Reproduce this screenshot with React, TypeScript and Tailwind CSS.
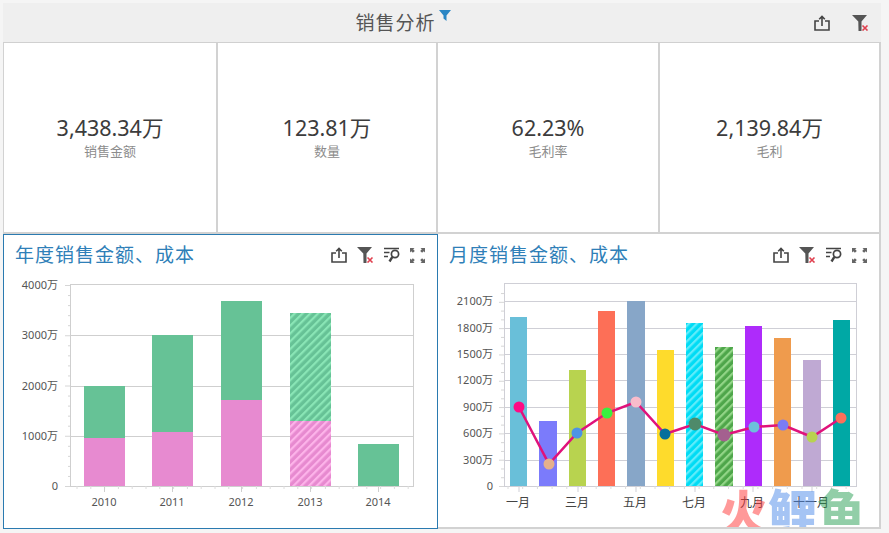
const kpis = [
  { value: '3,438.34万', label: '销售金额', width: 'w-[215px] border-l' },
  { value: '123.81万', label: '数量', width: 'w-[220px]' },
  { value: '62.23%', label: '毛利率', width: 'w-[222px]' },
  { value: '2,139.84万', label: '毛利', width: 'w-[221px]' },
]

const yearBars = [
  { label: '2010', x: 84, total: 386, cost: 438 },
  { label: '2011', x: 152, total: 335, cost: 432 },
  { label: '2012', x: 221, total: 301, cost: 400 },
  { label: '2013', x: 290, total: 313, cost: 421, hatched: true },
  { label: '2014', x: 358, total: 444, cost: 486 },
]

const monthBars = [
  { x: 510, w: 17, top: 317, fill: '#69bfd9' },
  { x: 539, w: 18, top: 421, fill: '#7b7bfb' },
  { x: 569, w: 17, top: 370, fill: '#b8d34f' },
  { x: 598, w: 17, top: 311, fill: '#fd6f57' },
  { x: 627, w: 18, top: 301, fill: '#87a6c8' },
  { x: 657, w: 17, top: 350, fill: '#fedb2c' },
  { x: 686, w: 17, top: 323, fill: 'url(#hatch-cyan)' },
  { x: 715, w: 18, top: 347, fill: 'url(#hatch-leaf)' },
  { x: 745, w: 17, top: 326, fill: '#ae2bfb' },
  { x: 774, w: 17, top: 338, fill: '#ef9b4d' },
  { x: 803, w: 18, top: 360, fill: '#bfa9d3' },
  { x: 833, w: 17, top: 320, fill: '#00a8a5' },
]

const monthPoints = [
  { x: 519, y: 407, r: 5.5, fill: '#ff0a84' },
  { x: 549, y: 464, r: 5.5, fill: '#e4b08d' },
  { x: 577, y: 433, r: 5.5, fill: '#4d94e5' },
  { x: 607, y: 413, r: 5.5, fill: '#39ef3f' },
  { x: 636, y: 402, r: 5.5, fill: '#f9bccb' },
  { x: 665, y: 434, r: 5.5, fill: '#066f9c' },
  { x: 695, y: 424, r: 6.5, fill: '#4e8a6a' },
  { x: 724, y: 435, r: 6.5, fill: '#a4608f' },
  { x: 754, y: 427, r: 5.5, fill: '#6cc0db' },
  { x: 783, y: 425, r: 5.5, fill: '#7a7cf5' },
  { x: 812, y: 437, r: 5.5, fill: '#b8d34f' },
  { x: 841, y: 418, r: 5.5, fill: '#fc6f5a' },
]

const monthTicks = [
  { y: 301, label: '2100万' },
  { y: 328, label: '1800万' },
  { y: 354, label: '1500万' },
  { y: 380, label: '1200万' },
  { y: 407, label: '900万' },
  { y: 433, label: '600万' },
  { y: 460, label: '300万' },
]

const monthLabels = [
  { x: 518, label: '一月' },
  { x: 577, label: '三月' },
  { x: 635, label: '五月' },
  { x: 694, label: '七月' },
  { x: 752, label: '九月' },
  { x: 811, label: '十一月' },
]

const ShareIcon = () => (
  <svg width="16" height="16" viewBox="0 0 16 16" fill="none" stroke="#444" strokeWidth="1.6">
    <path d="M5 6H1v9h14V6h-4" />
    <path d="M8 11V1.5M5.2 4.2 8 1.4l2.8 2.8" />
  </svg>
)

const FilterClearIcon = () => (
  <svg width="17" height="16" viewBox="0 0 17 16">
    <path d="M0 0h15L9.5 6.5V16H6.5l-.2-9.5z" fill="#555" />
    <path d="M10.5 10.5l5 5M15.5 10.5l-5 5" stroke="#e0404f" strokeWidth="1.6" />
  </svg>
)

const FindIcon = () => (
  <svg width="16" height="16" viewBox="0 0 16 16" fill="none" stroke="#444" strokeWidth="1.7">
    <path d="M0 1.5h15M0 5.5h5.5M0 9.5h4" />
    <circle cx="11" cy="7" r="3.6" />
    <path d="M8.4 9.8 5.5 14.5" strokeWidth="2.4" />
  </svg>
)

const ExpandIcon = () => (
  <svg width="15" height="15" viewBox="0 0 15 15" fill="#666">
    <path d="M0 0h4.5L3.2 1.3l1.6 1.6-1.9 1.9-1.6-1.6L0 4.5zM15 0v4.5l-1.3-1.3-1.6 1.6-1.9-1.9 1.6-1.6L10.5 0zM0 15v-4.5l1.3 1.3 1.6-1.6 1.9 1.9-1.6 1.6L4.5 15zM15 15h-4.5l1.3-1.3-1.6-1.6 1.9-1.9 1.6 1.6 1.3-1.3z" />
  </svg>
)

const PanelHeader = ({ title }: { title: string }) => (
  <div className="flex h-[42px] items-center justify-between pb-[2px] pl-[11px] pr-[12px]">
    <span className="text-[19px] tracking-[1px] text-[#2f7fb8]">{title}</span>
    <div className="flex items-center gap-[10px]">
      <ShareIcon />
      <FilterClearIcon />
      <FindIcon />
      <ExpandIcon />
    </div>
  </div>
)

const Hatch = ({ id, base, stripe }: { id: string; base: string; stripe: string }) => (
  <pattern id={id} width="5.5" height="5.5" patternUnits="userSpaceOnUse" patternTransform="rotate(45)">
    <rect width="5.5" height="5.5" fill={base} />
    <rect width="2.2" height="5.5" fill={stripe} />
  </pattern>
)

const range = (from: number, to: number, step: number) => {
  const out: number[] = []
  for (let v = from; v <= to; v += step) out.push(v)
  return out
}

const YearChart = () => (
  <svg width="432" height="251" viewBox="4 277 432 251" className="block">
    <defs>
      <Hatch id="hatch-green" base="#66c296" stripe="#8ae6b6" />
      <Hatch id="hatch-pink" base="#e78ad0" stripe="#fdb4ea" />
    </defs>
    <rect x="70.5" y="284.5" width="343" height="202" fill="none" stroke="#cfcfcf" />
    {[335, 386, 436].map((y) => (
      <line key={y} x1="70" x2="413" y1={y + 0.5} y2={y + 0.5} stroke="#cfcfcf" />
    ))}
    {range(0, 20, 1).map((i) => (
      <line key={i} x1={i % 5 === 0 ? 65 : 68} x2="70" y1={285.5 + i * 10.05} y2={285.5 + i * 10.05} stroke="#d6d6d6" />
    ))}
    {range(0, 24, 1).map((i) => (
      <line key={i} x1={77 + i * 13.8} x2={77 + i * 13.8} y1="486" y2="489" stroke="#dcdcdc" />
    ))}
    {yearBars.map((b) => (
      <g key={b.label}>
        <rect x={b.x} y={b.total} width="41" height={b.cost - b.total} fill={b.hatched ? 'url(#hatch-green)' : '#66c296'} />
        <rect x={b.x} y={b.cost} width="41" height={486 - b.cost} fill={b.hatched ? 'url(#hatch-pink)' : '#e78ad0'} />
        <line x1={b.x + 20.5} x2={b.x + 20.5} y1="486" y2="492" stroke="#cfcfcf" />
        <text x={b.x + 20} y="506" textAnchor="middle" fontSize="11" fill="#555">{b.label}</text>
      </g>
    ))}
    {[
      { y: 289, label: '4000万' },
      { y: 339, label: '3000万' },
      { y: 390, label: '2000万' },
      { y: 440, label: '1000万' },
      { y: 490, label: '0' },
    ].map((t) => (
      <text key={t.label} x="58" y={t.y} textAnchor="end" fontSize="11" fill="#555">{t.label}</text>
    ))}
  </svg>
)

const MonthChart = () => (
  <svg width="440" height="251" viewBox="438 277 440 251" className="block">
    <defs>
      <Hatch id="hatch-cyan" base="#00dcf5" stripe="#62ecfa" />
      <Hatch id="hatch-leaf" base="#4ea64a" stripe="#93d688" />
    </defs>
    <rect x="504.5" y="283.5" width="352" height="203" fill="none" stroke="#cfcfd6" />
    {monthTicks.map((t) => (
      <line key={t.y} x1="504" x2="856" y1={t.y + 0.5} y2={t.y + 0.5} stroke="#cfcfd6" />
    ))}
    {range(0, 22, 1).map((i) => (
      <line key={i} x1={i % 3 === 0 ? 499 : 501} x2="504" y1={486.5 - i * 8.77} y2={486.5 - i * 8.77} stroke="#d6d6d6" />
    ))}
    {range(0, 23, 1).map((i) => (
      <line key={i} x1={508 + i * 14.7} x2={508 + i * 14.7} y1="486" y2="489" stroke="#dcdcdc" />
    ))}
    {monthBars.map((b) => (
      <rect key={b.x} x={b.x} y={b.top} width={b.w} height={486 - b.top} fill={b.fill} />
    ))}
    <polyline points={monthPoints.map((p) => `${p.x},${p.y}`).join(' ')} fill="none" stroke="#e0127b" strokeWidth="2.5" />
    {monthPoints.map((p) => (
      <circle key={p.x} cx={p.x} cy={p.y} r={p.r} fill={p.fill} />
    ))}
    {monthTicks.map((t) => (
      <text key={t.label} x="493" y={t.y + 4} textAnchor="end" fontSize="11" fill="#555">{t.label}</text>
    ))}
    <text x="493" y="490" textAnchor="end" fontSize="11" fill="#555">0</text>
    {monthLabels.map((l) => (
      <g key={l.label}>
        <line x1={l.x + 1} x2={l.x + 1} y1="486" y2="492" stroke="#cfcfd6" />
        <text x={l.x} y="507" textAnchor="middle" fontSize="12" fill="#444">{l.label}</text>
      </g>
    ))}
  </svg>
)

export default function App() {
  return (
    <div className="h-[533px] w-[889px] overflow-hidden bg-[#f5f5f5] pl-[3px] pt-[3px] font-['Noto_Sans','Noto_Sans_CJK_SC',sans-serif]">
      <div className="w-[878px]">
        <div className="flex h-[40px] items-center border-b border-[#d0d0d0] bg-[#efefef]">
          <div className="flex flex-1 items-start justify-center pr-[11px]">
            <span className="mt-px text-[19px] tracking-[1px] text-[#555]">销售分析</span>
            <svg width="12" height="11" viewBox="0 0 12 11" className="ml-[3px] mt-[2px]">
              <path d="M0 0h12L7.5 5.5V11L4.5 8.5V5.5z" fill="#2a86c4" />
            </svg>
          </div>
          <div className="flex items-center gap-[22px] pr-[12px]">
            <ShareIcon />
            <FilterClearIcon />
          </div>
        </div>

        <div className="flex h-[191px]">
          {kpis.map((k) => (
            <div
              key={k.label}
              className={`flex flex-col items-center justify-center border-r-2 border-b-2 border-[#d2d2d2] bg-white ${k.width}`}
            >
              <span className="text-[21.5px] leading-[26px] text-[#3c3c3c]">{k.value}</span>
              <span className="text-[13px] leading-[20px] text-[#8c8c8c]">{k.label}</span>
            </div>
          ))}
        </div>

        <div className="flex h-[295px]">
          <div className="w-[435px] border border-[#2a7ab0] bg-white">
            <PanelHeader title="年度销售金额、成本" />
            <YearChart />
          </div>
          <div className="relative w-[443px] overflow-hidden border-r-2 border-b-2 border-[#d2d2d2] bg-white">
            <div className="pt-px">
              <PanelHeader title="月度销售金额、成本" />
            </div>
            <MonthChart />
            <div className="absolute left-[281px] top-[250px] flex text-[49px] font-black leading-[56px] opacity-50">
              <span className="text-[#ff3636]">火</span>
              <span className="text-[#4d8aeb]">鲤</span>
              <span className="text-[#279f53]">鱼</span>
            </div>
          </div>
        </div>
      </div>
    </div>
  )
}
